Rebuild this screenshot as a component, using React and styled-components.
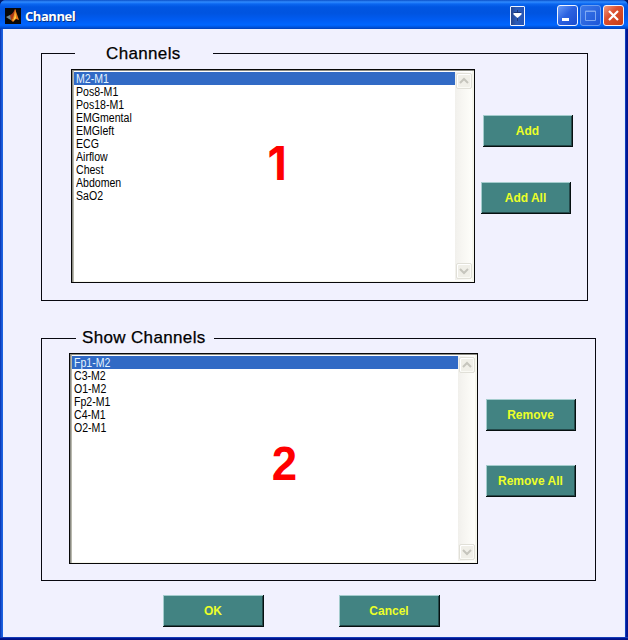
import React from 'react';
import styled, { createGlobalStyle } from 'styled-components';

const GlobalStyle = createGlobalStyle`
  * { box-sizing: border-box; }
  html, body { margin: 0; padding: 0; }
  body { width: 628px; height: 640px; overflow: hidden; background: #001a6a; }
`;

const Window = styled.main`
  width: 628px;
  height: 640px;
  display: flex;
  flex-direction: column;
  font-family: 'Liberation Sans', Arial, sans-serif;
  color: #000;
  background:
    linear-gradient(180deg, #2a60d0 0, #00189a 1px, #00107c 3px) 0 100% / 100% 3px no-repeat,
    linear-gradient(90deg, #0831b0 0, #1c62e0 2px, #1c62e0 3px, #2058d8 625px, #001c9c 626px, #00138c 628px);
  border-radius: 6px 6px 0 0;
`;

const TitleBar = styled.header`
  height: 29px;
  flex: none;
  display: flex;
  align-items: center;
  padding: 2px 4px 0 5px;
  border-radius: 6px 6px 0 0;
  background: linear-gradient(180deg, #0a50c8 0, #2f8bff 2px, #0a66f0 4px, #0056e2 7px, #0054e0 13px, #005cf2 20px, #0066ff 25px, #0055e0 27px, #0040b8 29px);
`;

const Title = styled.h1`
  margin: 0 auto 0 4px;
  font: bold 13px/18px 'Open Sans', sans-serif;
  letter-spacing: -0.45px;
  color: #fff;
  text-shadow: 1px 1px 0 #0a3080;
`;

const Controls = styled.div`
  display: flex;
  align-items: center;
  gap: 2px;
`;

const ControlButton = styled.button`
  display: block;
  width: 21px;
  height: 21px;
  padding: 0;
  border: 1px solid ${(p) => (p.$dim ? '#6b9df0' : '#f0f4ff')};
  border-radius: 3px;
  background: ${(p) =>
    p.$close
      ? 'linear-gradient(135deg, #f09a80 0, #dc5030 40%, #c83c14 100%)'
      : p.$dim
        ? 'linear-gradient(135deg, #3c78e8, #1c56d8)'
        : 'linear-gradient(135deg, #6a9cf8 0, #2c62e0 45%, #1a4cd0 100%)'};
  svg { display: block; }
`;

const MenuButton = styled(ControlButton)`
  width: 15px;
  height: 20px;
  margin-right: 32px;
  border-radius: 1px;
  background: linear-gradient(90deg, #26458c, #2c5cb8 40%, #2454b8);
`;

const Body = styled.div`
  flex: 1;
  margin: 0 3px 3px;
  padding: 14px 0 0 38px;
  background: #f1f1fe;
  border-right: 1px solid #e4f0ff;
`;

const Group = styled.fieldset`
  display: block;
  width: ${(p) => p.$width}px;
  height: ${(p) => p.$height}px;
  min-width: 0;
  margin: 0 0 ${(p) => p.$after}px;
  padding: 0;
  border: 1px solid #080810;
`;

const Legend = styled.legend`
  margin-left: ${(p) => p.$left}px;
  padding: 0 0 0 ${(p) => p.$inset}px;
  width: 138px;
  height: 21px;
  font-size: 17px;
  line-height: ${(p) => p.$line || 21}px;
  letter-spacing: 0.35px;
  -webkit-text-stroke: 0.25px #000;
  white-space: nowrap;
`;

const GroupRow = styled.div`
  display: flex;
  align-items: flex-start;
  padding-left: ${(p) => p.$left}px;
  margin-top: ${(p) => p.$top}px;
`;

const ListBox = styled.div`
  display: flex;
  flex: none;
  width: ${(p) => p.$width}px;
  height: ${(p) => p.$height}px;
  border: 1px solid #080808;
  background: #fff;
  box-shadow: inset 1px 1px 0 #8c8c84, inset 2px 0 0 #b8b8ae, inset -2px -1px 0 #f6f6ec;
  padding: 2px 2px 2px;
`;

const Items = styled.ul`
  flex: 1;
  margin: 0;
  padding: 0;
  list-style: none;
`;

const Item = styled.li`
  height: 13px;
  padding-left: 2px;
  font-size: 12px;
  line-height: 15px;
  color: ${(p) => (p.$selected ? '#e4f4ff' : '#000')};
  background: ${(p) => (p.$selected ? '#316ac5' : 'transparent')};
`;

const ItemText = styled.span`
  display: inline-block;
  transform: scaleX(0.88);
  transform-origin: 0 50%;
  white-space: nowrap;
`;

const ScrollTrack = styled.div`
  width: 17px;
  display: flex;
  flex-direction: column;
  justify-content: space-between;
  align-items: center;
  padding: 1px 0;
  background: linear-gradient(90deg, #f1f0ec, #f7f6f2 40%, #fefefa);
`;

const ScrollButton = styled.button`
  display: block;
  width: 16px;
  height: 16px;
  padding: 0;
  border: 1px solid #e1e0d8;
  border-radius: 2px;
  background: #f0efe8;
  box-shadow: inset 1px 1px 0 #fff, inset -1px -1px 0 #fafaf5;
  svg { display: block; }
`;

const Actions = styled.div`
  display: flex;
  flex-direction: column;
  gap: ${(p) => p.$gap}px;
  margin: ${(p) => p.$top}px 0 0 ${(p) => p.$left}px;
`;

const PushButton = styled.button`
  display: block;
  width: ${(p) => (p.$wide ? 101 : 90)}px;
  height: 32px;
  margin: 0 0 0 ${(p) => p.$indent || 0}px;
  padding: 0 1px 1px 0;
  border: 0;
  background: #428382;
  box-shadow: inset -1px -1px 0 #061010, inset 1px 1px 0 #a4cccd, inset -2px -2px 0 #24494a;
  color: #ecff28;
  font: bold 12px/14px 'Liberation Sans', Arial, sans-serif;
  white-space: nowrap;
`;

const Footer = styled.footer`
  display: flex;
  gap: 75px;
  padding-left: 122px;
`;

const ListArea = styled.div`
  position: relative;
`;

const Marker = styled.strong`
  position: absolute;
  left: ${(p) => p.$left}px;
  top: ${(p) => p.$top}px;
  font: bold 48px/48px 'Liberation Sans', Arial, sans-serif;
  color: #f00;
  transform: scaleX(0.95);
`;

/* Inter's "1" has a flag and no foot. */
const FootlessMarker = styled(Marker)`
  font-family: Inter, sans-serif;
  font-size: 47px;
`;

const MatlabIcon = () => (
  <svg width="16" height="16" viewBox="0 0 16 16">
    <rect width="16" height="16" fill="#080808" />
    <path d="M1 9 5 7 8 8 6 12 4 11Z" fill="#70858c" />
    <path d="M5 7Q8 6 10 1L11 2 9 9 6 12Z" fill="#a83818" />
    <path d="M10 1Q12 6 14 12L11 11 8 14 6 12Q9 10 10 1Z" fill="#e87818" />
    <path d="M10 3 11 10 8 13Q10 9 10 3Z" fill="#ffd850" />
  </svg>
);

const Chevron = ({ down }) => (
  <svg width="14" height="14" viewBox="0 0 14 14">
    <path
      d={down ? 'M3 5 7 9 11 5' : 'M3 9 7 5 11 9'}
      fill="none"
      stroke="#c6c5bd"
      strokeWidth="2"
    />
  </svg>
);

const ChannelList = ({ label, names, width, height, children }) => (
  <ListArea>
    <ListBox $width={width} $height={height}>
      <Items aria-label={label}>
        {names.map((name, i) => (
          <Item key={name} $selected={i === 0}>
            <ItemText>{name}</ItemText>
          </Item>
        ))}
      </Items>
      <ScrollTrack>
        <ScrollButton aria-label="Scroll up"><Chevron /></ScrollButton>
        <ScrollButton aria-label="Scroll down"><Chevron down /></ScrollButton>
      </ScrollTrack>
    </ListBox>
    {children}
  </ListArea>
);

const available = ['M2-M1', 'Pos8-M1', 'Pos18-M1', 'EMGmental', 'EMGleft', 'ECG', 'Airflow', 'Chest', 'Abdomen', 'SaO2'];
const shown = ['Fp1-M2', 'C3-M2', 'O1-M2', 'Fp2-M1', 'C4-M1', 'O2-M1'];

export default function App() {
  return (
    <>
      <GlobalStyle />
      <Window>
        <TitleBar>
          <MatlabIcon />
          <Title>Channel</Title>
          <MenuButton aria-label="Options">
            <svg width="13" height="18" viewBox="0 0 13 18">
              <path d="M3 5.5H10M6.5 3V14" stroke="#1c3878" />
              <path d="M2.5 6H10.5V7.5L6.5 11 2.5 7.5Z" fill="#fff" />
            </svg>
          </MenuButton>
          <Controls>
            <ControlButton aria-label="Minimize">
              <svg width="19" height="19"><path d="M4 12H11V15H4Z" fill="#fff" /></svg>
            </ControlButton>
            <ControlButton $dim aria-label="Maximize">
              <svg width="19" height="19">
                <path d="M4.5 5H14.5V14.5H4.5ZM4 5.5H15" fill="none" stroke="#7ea8f2" />
              </svg>
            </ControlButton>
            <ControlButton $close aria-label="Close">
              <svg width="19" height="19">
                <path d="M5 5 14 14M14 5 5 14" stroke="#fff" strokeWidth="2.2" />
              </svg>
            </ControlButton>
          </Controls>
        </TitleBar>
        <Body>
          <Group $width={547} $height={258} $after={27}>
            <Legend $left={33} $inset={31}>Channels</Legend>
            <GroupRow $left={29} $top={5}>
              <ChannelList label="Channels" names={available} width={404} height={214}>
                <FootlessMarker $left={196} $top={70}>1</FootlessMarker>
              </ChannelList>
              <Actions $gap={35} $top={46} $left={6}>
                <PushButton $indent={2}>Add</PushButton>
                <PushButton>Add All</PushButton>
              </Actions>
            </GroupRow>
          </Group>
          <Group $width={555} $height={253} $after={14}>
            <Legend $left={34} $inset={6} $line={19}>Show Channels</Legend>
            <GroupRow $left={27} $top={4}>
              <ChannelList label="Show Channels" names={shown} width={409} height={211}>
                <Marker $left={202} $top={87}>2</Marker>
              </ChannelList>
              <Actions $gap={34} $top={46} $left={8}>
                <PushButton>Remove</PushButton>
                <PushButton>Remove All</PushButton>
              </Actions>
            </GroupRow>
          </Group>
          <Footer>
            <PushButton $wide>OK</PushButton>
            <PushButton $wide>Cancel</PushButton>
          </Footer>
        </Body>
      </Window>
    </>
  );
}
